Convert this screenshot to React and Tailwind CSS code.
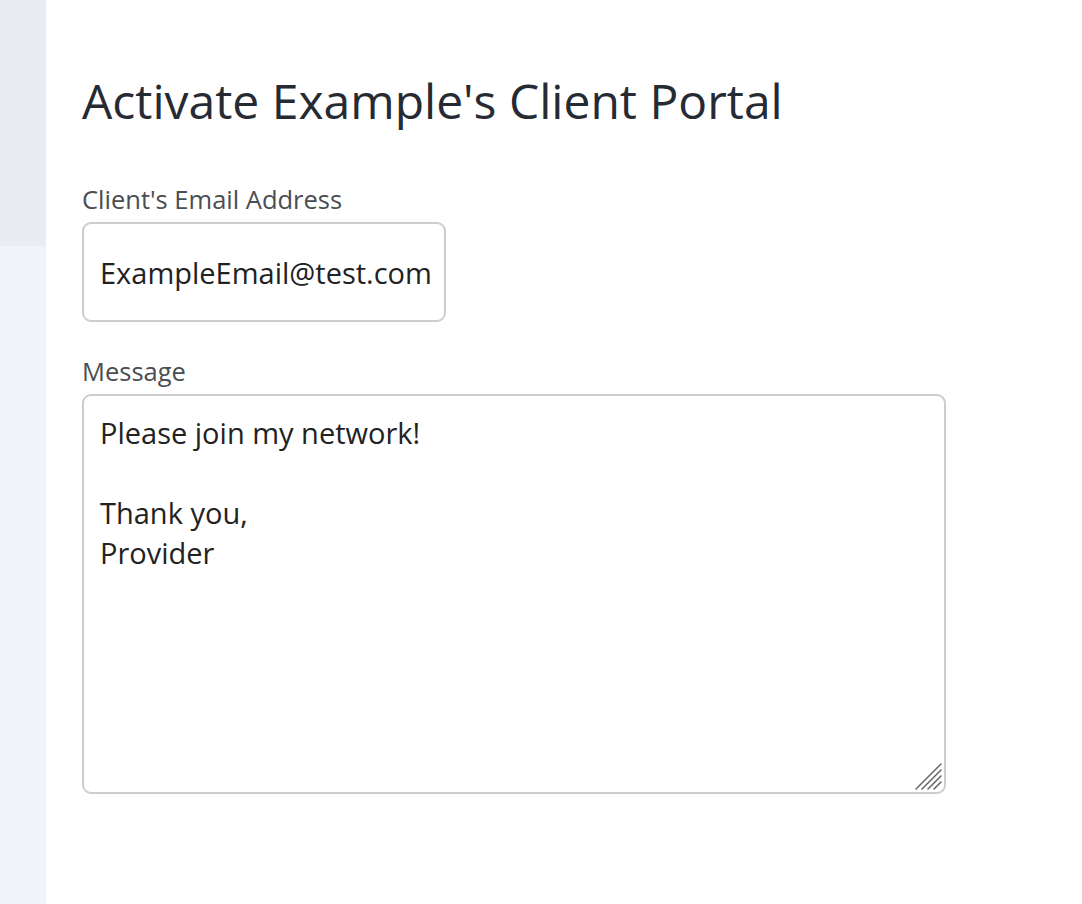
import React, { useState } from 'react';

const ResizeGrip = () => (
  <svg className="absolute right-[4px] bottom-[4px] pointer-events-none" width="28" height="28" viewBox="0 0 28 28">
    <g stroke="#6b6b6b" strokeWidth="1.6" strokeLinecap="round">
      <line x1="2" y1="27" x2="27" y2="2" />
      <line x1="8" y1="27" x2="27" y2="8" />
      <line x1="14" y1="27" x2="27" y2="14" />
      <line x1="20" y1="27" x2="27" y2="20" />
    </g>
  </svg>
);

const App = () => {
  const [email, setEmail] = useState('ExampleEmail@test.com');
  const [message, setMessage] = useState('Please join my network!\n\nThank you,\nProvider');

  return (
    <div className="min-h-screen flex bg-white" style={{ fontFamily: '"Open Sans", sans-serif' }}>
      <div className="w-[46px] shrink-0 flex flex-col">
        <div className="h-[246px] bg-[#e9edf2]" />
        <div className="flex-1 bg-[#f0f4f8]" />
      </div>
      <div className="flex-1 pl-[36px] pt-[68px]">
        <h1 className="text-[48px] leading-[66px] text-[#262b33] font-normal">Activate Example's Client Portal</h1>
        <div className="mt-[50px]">
          <label className="block text-[25.5px] leading-[30px] text-[#4a4d52]">Client's Email Address</label>
          <input
            type="text"
            value={email}
            onChange={(e)=>setEmail(e.target.value)}
            className="mt-[8px] block w-[364px] h-[100px] pl-[16px] pr-[4px] border-2 border-[#cdcdcd] rounded-[9px] text-[29px] text-[#222] outline-none"
          />
        </div>
        <div className="mt-[34px]">
          <label className="block text-[25.5px] leading-[30px] text-[#4a4d52]">Message</label>
          <textarea
            value={message}
            onChange={(e)=>setMessage(e.target.value)}
            className="mt-[8px] block w-[864px] h-[400px] px-[16px] pt-[17px] border-2 border-[#cdcdcd] rounded-[9px] text-[29px] leading-[40px] text-[#222] outline-none resize-none"
          />
          <div className="relative w-[864px] -mt-[400px] h-[400px] pointer-events-none">
            <ResizeGrip />
          </div>
        </div>
      </div>
    </div>
  );
};

export default App;
